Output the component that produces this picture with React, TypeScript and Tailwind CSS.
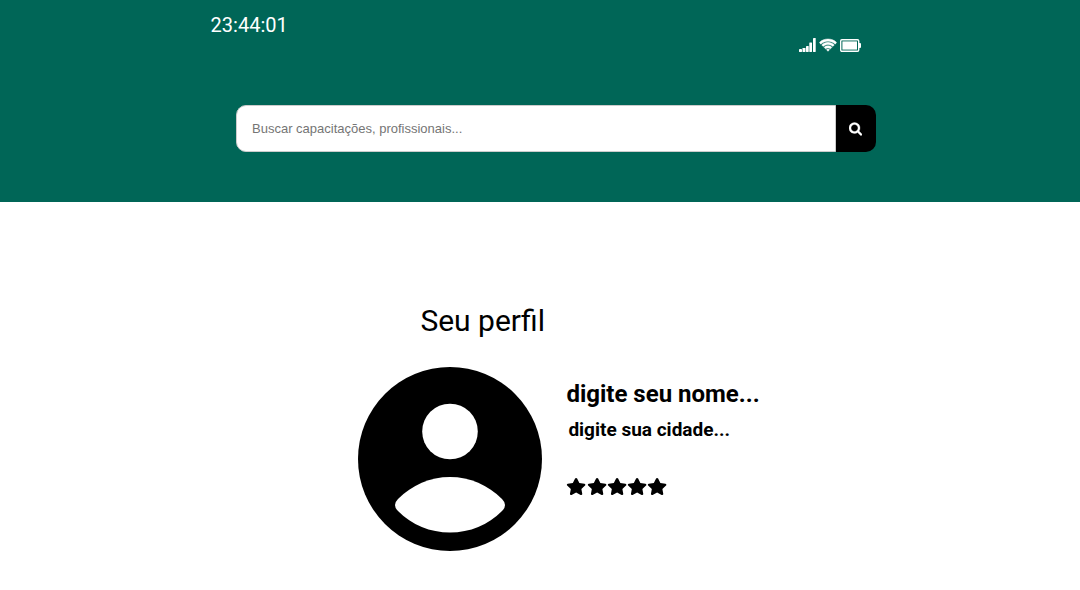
import { useState } from "react";
import { FaStar } from "react-icons/fa6";

function SignalIcon() {
  return (
    <svg viewBox="0 0 17 16" className="h-4 w-[17px]" fill="currentColor" aria-hidden="true">
      <rect x="0" y="12" width="3" height="3" rx="0.400" />
      <rect x="3.500" y="11" width="3" height="4" rx="0.400" />
      <rect x="7" y="9" width="2.700" height="6" rx="0.400" />
      <rect x="10.300" y="5.500" width="2.700" height="9.500" rx="0.400" />
      <rect x="14" y="1" width="2.700" height="14" rx="0.400" />
    </svg>
  );
}

function WifiIcon() {
  return (
    <svg
      viewBox="96 0 2048 1792"
      className="h-4 w-[18px]"
      fill="currentColor"
      stroke="currentColor"
      strokeWidth="50"
      aria-hidden="true"
    >
      <path d="M1120 1603q-20 0-93-73.5t-73-93.5q0-32 62.5-54t103.5-22 103.5 22 62.5 54q0 20-73 93.5t-93 73.5zm270-271q-2 0-40-25t-101.5-50-128.5-25-128.5 25-101 50-40.5 25q-18 0-93.5-75t-75.5-93q0-13 10-23 78-77 196-121t233-44 233 44 196 121q10 10 10 23 0 18-75.5 93t-93.5 75zm273-272q-11 0-23-8-136-105-252-154.5t-268-49.5q-85 0-170.5 22t-149 53-113.5 62-79 53-31 22q-17 0-92-75t-75-93q0-12 10-22 132-132 320-205t380-73 380 73 320 205q10 10 10 22 0 18-75 93t-92 75zm271-271q-11 0-22-9-179-157-371.5-236.5t-420.5-79.5-420.5 79.5-371.5 236.5q-11 9-22 9-17 0-92.5-75t-75.5-93q0-13 10-23 187-186 445-288t527-102 527 102 445 288q10 10 10 23 0 18-75.5 93t-92.5 75z" />
    </svg>
  );
}

function BatteryIcon() {
  return (
    <svg viewBox="0 0 21 16" className="h-4 w-[21px]" fill="none" aria-hidden="true">
      <rect x="0.700" y="2.700" width="18" height="11.600" rx="1.200" stroke="currentColor" strokeWidth="1.400" />
      <path d="M19 6h1q1 0 1 1v3q0 1-1 1h-1z" fill="currentColor" />
      <rect x="2.400" y="4.400" width="14.600" height="8.200" fill="currentColor" />
    </svg>
  );
}

function SearchIcon() {
  return (
    <svg
      viewBox="64 64 1664 1792"
      className="mr-0.5 h-[14px] w-[13px]"
      fill="currentColor"
      stroke="currentColor"
      strokeWidth="40"
      aria-hidden="true"
    >
      <path d="M1216 832q0-185-131.500-316.500t-316.500-131.500-316.500 131.500-131.500 316.500 131.500 316.500 316.500 131.500 316.500-131.500 131.500-316.500zm512 832q0 52-38 90t-90 38q-54 0-90-38l-343-342q-179 124-399 124-143 0-273.500-55.500t-225-150-150-225-55.500-273.500 55.500-273.500 150-225 225-150 273.500-55.500 273.500 55.500 225 150 150 225 55.500 273.500q0 220-124 399l343 343q37 37 37 90z" />
    </svg>
  );
}

function Avatar() {
  return (
    <svg viewBox="0 0 184 184" className="size-[184px] shrink-0" role="img" aria-label="Foto de perfil">
      <circle cx="92" cy="92" r="92" fill="black" />
      <circle cx="92" cy="64.500" r="27.800" fill="white" />
      <path
        d="M92 110C112 110 130 118 144 132Q150 138 144 144C130 158 112 165.500 92 165.500C72 165.500 54 158 40 144Q34 138 40 132C54 118 72 110 92 110Z"
        fill="white"
      />
    </svg>
  );
}

export default function App() {
  const [query, setQuery] = useState("");

  return (
    <div className="min-h-screen bg-white font-['Roboto',sans-serif] text-black">
      <header className="bg-[#006657] pt-2.5 pb-[50px] text-white">
        <div className="mx-auto flex w-[61%] items-start justify-between pr-2">
          <time className="text-xl leading-[30px]">23:44:01</time>
          <div className="flex items-center gap-[3px] pt-[27px]" role="img" aria-label="Sinal, wi-fi e bateria">
            <SignalIcon />
            <WifiIcon />
            <BatteryIcon />
          </div>
        </div>
        <div className="pl-8">
          <form
            className="mx-auto mt-[52px] flex w-full max-w-[640px]"
            role="search"
            onSubmit={(e) => e.preventDefault()}
          >
            <input
              type="search"
              aria-label="Buscar"
              placeholder="Buscar capacitações, profissionais..."
              value={query}
              onChange={(e) => setQuery(e.target.value)}
              className="h-[47px] min-w-0 flex-1 rounded-l-[10px] border border-[#ccc] bg-white px-[15px] font-['Liberation_Sans',sans-serif] text-[13px] text-black placeholder:text-[#757575]"
            />
            <button
              type="submit"
              aria-label="Pesquisar"
              className="flex w-10 items-center justify-center rounded-r-[10px] bg-black text-white"
            >
              <SearchIcon />
            </button>
          </form>
        </div>
      </header>

      <main className="ml-[33%] pt-[100px] pl-0.5">
        <h1 className="pl-[62px] text-[30px] leading-[38px]">Seu perfil</h1>
        <section className="mt-[27px] flex gap-6">
          <Avatar />
          <div className="pt-3">
            <h2 className="text-2xl leading-[30px] font-bold">digite seu nome...</h2>
            <h3 className="mt-2 pl-0.5 text-[19px] leading-[26px] font-bold">digite sua cidade...</h3>
            <div className="mt-[35px] flex w-[101px]" role="img" aria-label="5 estrelas">
              {[1, 2, 3, 4, 5].map((n) => (
                <FaStar key={n} preserveAspectRatio="none" className="h-[17px] min-w-0 flex-1" />
              ))}
            </div>
          </div>
        </section>
      </main>
    </div>
  );
}
